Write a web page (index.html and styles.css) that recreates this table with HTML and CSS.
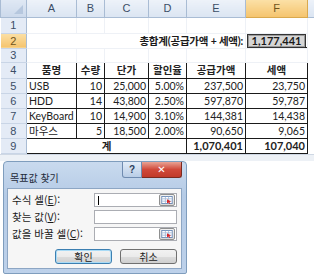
FILE: index.html
```html
<!DOCTYPE html>
<html lang="ko">
<head>
<meta charset="utf-8">
<link rel="stylesheet" href="styles.css">
</head>
<body>
<div class="sheet">
  <table class="grid">
    <colgroup>
      <col class="c-rh"><col class="c-a"><col class="c-b"><col class="c-c"><col class="c-d"><col class="c-e"><col class="c-f"><col class="c-x">
    </colgroup>
    <tr class="r-hdr">
      <th class="corner"><span class="tri"></span></th>
      <th class="ch">A</th><th class="ch">B</th><th class="ch">C</th><th class="ch">D</th><th class="ch">E</th><th class="ch sel">F</th><th class="ch-x"></th>
    </tr>
    <tr class="r-1">
      <th class="rh">1</th><td></td><td></td><td></td><td></td><td></td><td></td><td class="x"></td>
    </tr>
    <tr class="r-2">
      <th class="rh sel">2</th>
      <td colspan="5" class="total-label">총합계(공급가액 + 세액):</td>
      <td class="total-cell"><div class="total-box">1,177,441</div></td>
      <td class="x"></td>
    </tr>
    <tr class="r-3">
      <th class="rh">3</th><td></td><td></td><td></td><td></td><td></td><td></td><td class="x"></td>
    </tr>
    <tr class="r-4">
      <th class="rh">4</th>
      <td class="d hd">품명</td><td class="d hd">수량</td><td class="d hd">단가</td><td class="d hd">할인율</td><td class="d hd">공급가액</td><td class="d hd">세액</td><td class="x"></td>
    </tr>
    <tr class="r-d">
      <th class="rh">5</th>
      <td class="d l">USB</td><td class="d n">10</td><td class="d n">25,000</td><td class="d n">5.00%</td><td class="d n">237,500</td><td class="d n">23,750</td><td class="x"></td>
    </tr>
    <tr class="r-d">
      <th class="rh">6</th>
      <td class="d l">HDD</td><td class="d n">14</td><td class="d n">43,800</td><td class="d n">2.50%</td><td class="d n">597,870</td><td class="d n">59,787</td><td class="x"></td>
    </tr>
    <tr class="r-d">
      <th class="rh">7</th>
      <td class="d l">KeyBoard</td><td class="d n">10</td><td class="d n">14,900</td><td class="d n">3.10%</td><td class="d n">144,381</td><td class="d n">14,438</td><td class="x"></td>
    </tr>
    <tr class="r-d">
      <th class="rh">8</th>
      <td class="d l">마우스</td><td class="d n">5</td><td class="d n">18,500</td><td class="d n">2.00%</td><td class="d n">90,650</td><td class="d n">9,065</td><td class="x"></td>
    </tr>
    <tr class="r-d">
      <th class="rh">9</th>
      <td colspan="4" class="d hd">계</td><td class="d n b">1,070,401</td><td class="d n b">107,040</td><td class="x"></td>
    </tr>
  </table>
  <div class="sheet-foot"></div>
</div>

<div class="dlg">
  <div class="titlebar">
    <span class="title">목표값 찾기</span>
    <div class="tb-btns">
      <span class="tb-help">?</span>
      <span class="tb-close">✕</span>
    </div>
  </div>
  <div class="client">
    <div class="form">
      <label class="lbl">수식 셀(<u>E</u>):</label>
      <div class="inp"><span class="caret"></span><span class="pick"><svg width="14" height="10" viewBox="0 0 14 10"><rect x="0.5" y="0.5" width="13" height="9" fill="#fff" stroke="#5a7fb0"/><path d="M1 3.5h12M1 6.5h12M5 1v8M9 1v8" stroke="#9fb6d6" stroke-width="1"/><path d="M7 4l5 3-2 .6 1.2 2-1 .4-1.2-2L7 9.2z" fill="#d8262a"/></svg></span></div>
      <label class="lbl">찾는 값(<u>V</u>):</label>
      <div class="inp"></div>
      <label class="lbl">값을 바꿀 셀(<u>C</u>):</label>
      <div class="inp"><span class="pick"><svg width="14" height="10" viewBox="0 0 14 10"><rect x="0.5" y="0.5" width="13" height="9" fill="#fff" stroke="#5a7fb0"/><path d="M1 3.5h12M1 6.5h12M5 1v8M9 1v8" stroke="#9fb6d6" stroke-width="1"/><path d="M7 4l5 3-2 .6 1.2 2-1 .4-1.2-2L7 9.2z" fill="#d8262a"/></svg></span></div>
    </div>
    <div class="buttons">
      <button class="btn default">확인</button>
      <button class="btn">취소</button>
    </div>
  </div>
</div>
</body>
</html>
```

FILE: styles.css
```css
html, body {
  margin: 0;
  padding: 0;
  background: #ffffff;
}
body {
  width: 314px;
  height: 280px;
  overflow: hidden;
  font-family: Lato, "Noto Sans CJK KR", sans-serif;
  color: #1a1a1a;
}

.sheet {
  width: 314px;
}
.grid {
  border-collapse: collapse;
  table-layout: fixed;
  width: 314px;
  font-size: 10.5px;
}
.c-rh { width: 26px; }
.c-a { width: 50px; }
.c-b { width: 28px; }
.c-c { width: 44px; }
.c-d { width: 38px; }
.c-e { width: 59px; }
.c-f { width: 62px; }
.c-x { width: 7px; }

.grid td, .grid th {
  padding: 0 2px;
  line-height: 12px;
  overflow: hidden;
  white-space: nowrap;
}
.grid td {
  border: 1px solid #eef1f6;
}
.grid td.x {
  border: none;
  border-left: 1px solid #eef1f6;
}

.r-hdr { height: 17px; }
.r-1 { height: 16px; }
.r-2 { height: 14px; }
.r-3 { height: 14px; }
.r-4 { height: 16px; }
.r-d { height: 15px; }

.ch, .ch-x, .corner {
  font-weight: normal;
  color: #3b4d66;
  font-family: "Liberation Sans", sans-serif;
  font-size: 11px;
  background: linear-gradient(#edf2f9, #dbe5f2);
  border: 1px solid #a9bcd4;
  border-top: none;
}
.ch-x {
  border-right: none;
}
.ch.sel {
  background: linear-gradient(#fbe0a6, #f5c46e);
  border-color: #d9a94e;
  color: #70531c;
}
.corner {
  position: relative;
  background: linear-gradient(#dfe8f4, #ccd9eb);
}
.tri {
  position: absolute;
  right: 3px;
  bottom: 3px;
  width: 0;
  height: 0;
  border-left: 9px solid transparent;
  border-bottom: 9px solid #b6c7de;
}
.rh {
  font-weight: normal;
  font-family: "Liberation Sans", sans-serif;
  font-size: 11px;
  color: #3b4d66;
  background: #e4ebf6;
  border-right: 1px solid #a9bcd4;
  border-bottom: 1px solid #c9d5e6;
  text-align: center;
}
.rh.sel {
  background: linear-gradient(#fbe0a6, #f5c46e);
  color: #70531c;
}

.total-label {
  text-align: right;
  font-weight: bold;
  font-size: 10.5px;
  letter-spacing: -0.2px;
}
.grid td.total-cell {
  padding: 0;
  border: none;
}
.total-box {
  height: 12px;
  margin: 0 1px;
  border: 1px solid #333;
  box-shadow: inset 0 0 0 1px #9a9a9a;
  background: #d6d6d6;
  text-align: center;
  font-weight: bold;
  font-size: 11px;
  line-height: 12px;
  position: relative;
}
.total-box::after {
  content: "";
  position: absolute;
  right: -3px;
  bottom: -3px;
  width: 3px;
  height: 3px;
  background: #222;
}

.grid td.d {
  border: 1px solid #1a1a1a;
  color: #222;
}
.hd {
  text-align: center;
  font-weight: bold;
  font-size: 10.5px;
}
.l { text-align: left; }
.n { text-align: right; }
.b { font-weight: bold; font-size: 11px; }

.sheet-foot {
  height: 6px;
  background: #edf1f6;
  border-top: 1px solid #cfd8e4;
}

/* dialog */
.dlg {
  margin-left: 3px;
  width: 184px;
  height: 113px;
  box-sizing: border-box;
  border: 1px solid #7f9dbd;
  border-radius: 4px 4px 2px 2px;
  background: linear-gradient(#c9daee, #b5cbe6 30%, #bdd1ea);
  padding: 0 4px 4px 3px;
  display: flex;
  flex-direction: column;
}
.titlebar {
  height: 26px;
  flex: none;
  display: flex;
  align-items: flex-start;
  justify-content: space-between;
}
.title {
  margin-top: 10px;
  margin-left: 3px;
  font-family: "Noto Sans CJK KR", sans-serif;
  font-size: 10px;
  line-height: 12px;
  color: #1e2a3a;
}
.tb-btns {
  display: flex;
}
.tb-help {
  width: 20px;
  height: 16px;
  box-sizing: border-box;
  border: 1px solid #6f8bb0;
  border-top: none;
  border-radius: 0 0 0 3px;
  background: linear-gradient(#e2ecf8, #b9cde6);
  font-family: "Liberation Sans", sans-serif;
  font-size: 10px;
  font-weight: bold;
  color: #2c3e5a;
  text-align: center;
  line-height: 15px;
}
.tb-close {
  width: 40px;
  height: 16px;
  box-sizing: border-box;
  border: 1px solid #7a2a20;
  border-top: none;
  border-left: none;
  border-radius: 0 0 3px 0;
  background: linear-gradient(#e9a394, #d0493a 50%, #c13a2a);
  color: #ffffff;
  font-family: "DejaVu Sans", sans-serif;
  font-size: 10px;
  font-weight: bold;
  text-align: center;
  line-height: 15px;
}
.client {
  flex: 1;
  background: #f6f6f6;
  border: 1px solid #8da6c4;
  box-sizing: border-box;
  padding: 4px 4px 0 4px;
  display: flex;
  flex-direction: column;
}
.form {
  display: grid;
  grid-template-columns: 82px 83px;
  grid-auto-rows: 14px;
  row-gap: 3px;
  align-items: center;
}
.lbl {
  font-family: "Noto Sans CJK KR", sans-serif;
  font-size: 10.5px;
  line-height: 14px;
  color: #1a1a1a;
  white-space: nowrap;
}
.inp {
  height: 14px;
  box-sizing: border-box;
  border: 1px solid #abadb3;
  background: #fff;
  position: relative;
}
.caret {
  position: absolute;
  left: 3px;
  top: 2px;
  width: 1px;
  height: 9px;
  background: #000;
}
.pick {
  position: absolute;
  right: 1px;
  top: 0px;
  width: 16px;
  height: 12px;
  box-sizing: border-box;
  border: 1px solid #8e8f8f;
  border-radius: 2px;
  background: linear-gradient(#f2f2f2, #d8d8d8);
  display: flex;
  align-items: center;
  justify-content: center;
}
.pick svg {
  width: 12px;
  height: 8px;
}
.buttons {
  margin-top: 8px;
  display: flex;
  justify-content: flex-end;
  gap: 8px;
  padding-right: 0px;
}
.btn {
  width: 57px;
  height: 15px;
  padding: 0;
  border: 1px solid #707070;
  border-radius: 3px;
  background: linear-gradient(#f2f2f2 0%, #ebebeb 50%, #dddddd 51%, #cfcfcf 100%);
  font-family: "Noto Sans CJK KR", sans-serif;
  font-size: 10px;
  line-height: 13px;
  color: #1a1a1a;
}
.btn.default {
  border-color: #3c7fb1;
  box-shadow: inset 0 0 0 1px #a9dbf6;
}
```
